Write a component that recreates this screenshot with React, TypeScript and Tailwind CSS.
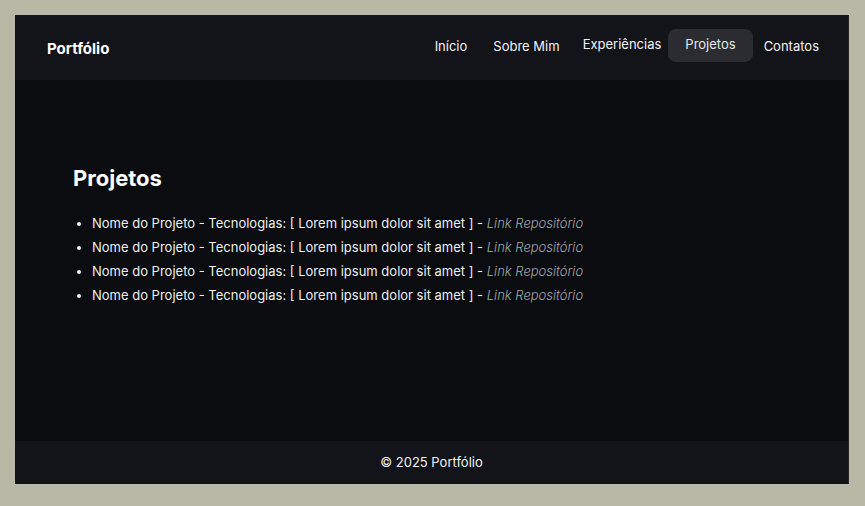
import React from "react";

export default function App() {
  const items = [1, 2, 3, 4];
  return (
    <div className="w-[865px] h-[506px] bg-[#b8b8a6] p-[15px] box-border" style={{ fontFamily: "Inter, 'Noto Sans', sans-serif" }}>
      <div className="flex flex-col w-[834px] h-[469px] bg-[#0b0c0f] border-r border-[#24262b]">
        <header className="h-[65px] bg-[#131419] flex items-center justify-between pl-[32px] pr-[29px]">
          <div className="text-white font-bold text-[15px] leading-none translate-y-[1px]">Portfólio</div>
          <nav className="flex items-center text-[13px] text-[#f1f2f4]">
            <span className="mr-[26px] translate-y-[-1px]">Início</span>
            <span className="mr-[23px] translate-y-[-1px]">Sobre Mim</span>
            <span className="mr-[7px] translate-y-[-3px]">Experiências</span>
            <span className="mr-[11px] h-[33px] px-[17px] rounded-lg bg-[#2a2c32] flex items-center translate-y-[-2px] text-[#e5e7eb]">
              <span className="translate-y-[-1px]">Projetos</span>
            </span>
            <span className="translate-y-[-1px]">Contatos</span>
          </nav>
        </header>
        <main className="flex-1 pt-[84px] pl-[58px]">
          <h2 className="text-white font-bold text-[22px] leading-[28px]">Projetos</h2>
          <ul className="list-disc pl-[19px] mt-[19px] text-[13px] leading-[24px] text-[#eceef1]">
            {items.map((i) => (
              <li key={i}>
                Nome do Projeto - Tecnologias: [ Lorem ipsum dolor sit amet ] -{" "}
                <em className="text-[#a3a6ad] italic font-light">Link Repositório</em>
              </li>
            ))}
          </ul>
        </main>
        <footer className="h-[43px] bg-[#131419] flex items-center justify-center text-[13px] text-[#f1f2f4]">
          © 2025 Portfólio
        </footer>
      </div>
    </div>
  );
}
